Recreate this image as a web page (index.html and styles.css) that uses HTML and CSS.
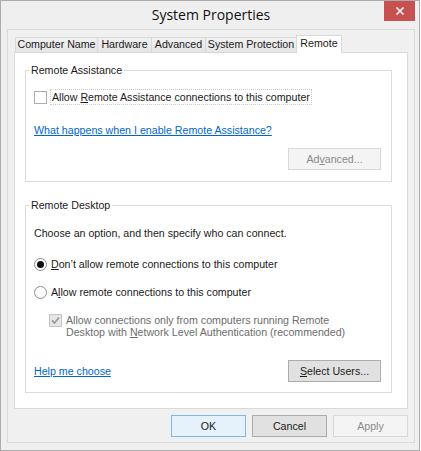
FILE: index.html
```html
<!DOCTYPE html>
<html lang="en">
  <head>
    <meta charset="UTF-8" />
    <title>System Properties</title>
    <link rel="stylesheet" href="styles.css">
  </head>

  <body>
    <div class="window">
      <div class="titlebar">
        <span class="title">System Properties</span>
        <button class="close" aria-label="Close">
          <svg width="10" height="10" viewBox="0 0 10 10">
            <path d="M1.5 1.5 L8.5 8.5 M8.5 1.5 L1.5 8.5" stroke="#fff" stroke-width="1.6" fill="none" />
          </svg>
        </button>
      </div>

      <div class="client">
        <div class="tabs">
          <div class="tab tab-name">Computer Name</div>
          <div class="tab tab-hardware">Hardware</div>
          <div class="tab tab-advanced">Advanced</div>
          <div class="tab tab-protection">System Protection</div>
          <div class="tab tab-remote active">Remote</div>
        </div>

        <div class="tabpanel">
          <fieldset class="group group-assist">
            <legend>Remote Assistance</legend>
            <div class="group-body">
              <div class="option option-assist">
                <span class="check"></span>
                <span class="label focused">Allow <u>R</u>emote Assistance connections to this computer</span>
              </div>
              <a class="link link-assist">What happens when I enable Remote Assistance?</a>
              <div class="btn-row btn-row-assist">
                <button class="btn disabled">Ad<u>v</u>anced...</button>
              </div>
            </div>
          </fieldset>

          <fieldset class="group group-desktop">
            <legend>Remote Desktop</legend>
            <div class="group-body">
              <p class="intro">Choose an option, and then specify who can connect.</p>
              <div class="option option-deny">
                <span class="radio checked"></span>
                <span class="label"><u>D</u>on’t allow remote connections to this computer</span>
              </div>
              <div class="option option-allow">
                <span class="radio"></span>
                <span class="label">A<u>l</u>low remote connections to this computer</span>
              </div>
              <div class="option option-nla">
                <span class="check checked disabled">
                  <svg width="11" height="11" viewBox="0 0 11 11">
                    <path d="M2 5.5 L4.5 8 L9 2.5" stroke="#9a9a9a" stroke-width="1.8" fill="none" />
                  </svg>
                </span>
                <span class="label muted">Allow connections only from computers running Remote<br>Desktop with <u>N</u>etwork Level Authentication (recommended)</span>
              </div>
              <div class="btn-row btn-row-users">
                <a class="link">Help me choose</a>
                <button class="btn"><u>S</u>elect Users...</button>
              </div>
            </div>
          </fieldset>
        </div>

        <div class="dialog-buttons">
          <button class="btn default">OK</button>
          <button class="btn">Cancel</button>
          <button class="btn disabled">Apply</button>
        </div>
      </div>
    </div>
  </body>
</html>
```

FILE: styles.css
```css
* {
  margin: 0;
  padding: 0;
  box-sizing: border-box;
}

body {
  width: 421px;
  height: 451px;
  background-color: #ffffff;
  font-family: "Liberation Sans", Arial, sans-serif;
  font-size: 10.65px;
  color: #1a1a1a;
}

.window {
  width: 420px;
  height: 451px;
  border: 1px solid #acacac;
  background-color: #efefef;
  padding: 0 4px 7px 6px;
  display: flex;
  flex-direction: column;
}

.titlebar {
  height: 28px;
  display: grid;
  grid-template-columns: 1fr auto 1fr;
  align-items: start;
}

.title {
  grid-column: 2;
  font-family: "Open Sans", sans-serif;
  font-size: 14px;
  line-height: 28px;
  color: #111;
}

.close {
  grid-column: 3;
  justify-self: end;
  width: 31px;
  height: 20px;
  border: none;
  background-color: #c75050;
  display: flex;
  align-items: center;
  justify-content: center;
}

.client {
  flex: 1;
  border: 1px solid #d9d9d9;
  background-color: #f0f0f0;
  padding: 5px 6px 5px 6px;
  display: flex;
  flex-direction: column;
}

/* tab strip */
.tabs {
  height: 17px;
  display: flex;
  align-items: flex-end;
  padding-left: 1px;
}

.tab {
  height: 15px;
  margin-right: -1px;
  border: 1px solid #d9d9d9;
  border-bottom: none;
  background: linear-gradient(#f0f0f0, #e5e5e5);
  line-height: 13px;
  text-align: center;
  white-space: nowrap;
}

.tab-name { width: 83px; }
.tab-hardware { width: 55px; }
.tab-advanced { width: 55px; }
.tab-protection { width: 92px; }
.tab-remote { width: 46px; }

.tab.active {
  height: 18px;
  margin-bottom: -1px;
  background: #ffffff;
  line-height: 14px;
  position: relative;
  z-index: 1;
}

.tabpanel {
  height: 357px;
  border: 1px solid #d9d9d9;
  background-color: #ffffff;
  padding: 11px 15px 15px 10px;
}

/* group boxes */
.group {
  border: 1px solid #dcdcdc;
  padding: 0 10px 11px 3px;
  min-width: 0;
}

.group legend {
  padding: 0 2px;
  line-height: 13px;
}

.group-desktop {
  margin-top: 17px;
  padding-bottom: 10px;
}

.group-body {
  padding-left: 5px;
}

.option {
  display: flex;
  align-items: center;
  height: 16px;
}

.option-assist { margin-top: 12px; }
.option-deny { margin-top: 16px; }
.option-allow { margin-top: 12px; }

.option-nla {
  margin-top: 14px;
  height: auto;
  align-items: flex-start;
  padding-left: 15px;
}

.check {
  width: 13px;
  height: 13px;
  border: 1px solid #adadad;
  background-color: #fff;
  display: flex;
  align-items: center;
  justify-content: center;
}

.check.disabled {
  border-color: #c4c4c4;
  background-color: #e6e6e6;
}

.radio {
  width: 13px;
  height: 13px;
  border: 1px solid #8c8c8c;
  border-radius: 50%;
  background-color: #fff;
  display: flex;
  align-items: center;
  justify-content: center;
}

.radio.checked::after {
  content: "";
  width: 7px;
  height: 7px;
  border-radius: 50%;
  background-color: #111;
}

.label {
  margin-left: 3px;
  padding: 0 1px;
  line-height: 14px;
  white-space: nowrap;
}

.focused {
  border: 1px dotted #c8c8c8;
}

.muted {
  color: #6d6d6d;
  line-height: 12px;
}

.intro {
  margin-top: 15px;
  line-height: 13px;
}

.link {
  color: #0066cc;
  text-decoration: underline;
  cursor: pointer;
}

.link-assist {
  display: block;
  margin-top: 19px;
  line-height: 13px;
}

.btn-row {
  display: flex;
  justify-content: flex-end;
  align-items: center;
}

.btn-row-assist { margin-top: 11px; }

.btn-row-users {
  margin-top: 22px;
  justify-content: space-between;
}

.btn {
  width: 93px;
  height: 22px;
  border: 1px solid #adadad;
  background-color: #e1e1e1;
  font-family: inherit;
  font-size: 10.65px;
  color: #1a1a1a;
}

.btn.disabled {
  border-color: #d9d9d9;
  background-color: #f4f4f4;
  color: #8a8a8a;
}

.btn.default {
  border-color: #82b5e8;
  background-color: #e5f1fb;
}

.dialog-buttons {
  margin-top: 6px;
  display: flex;
  justify-content: flex-end;
  gap: 6px;
}

.dialog-buttons .btn {
  width: 75px;
}
```
